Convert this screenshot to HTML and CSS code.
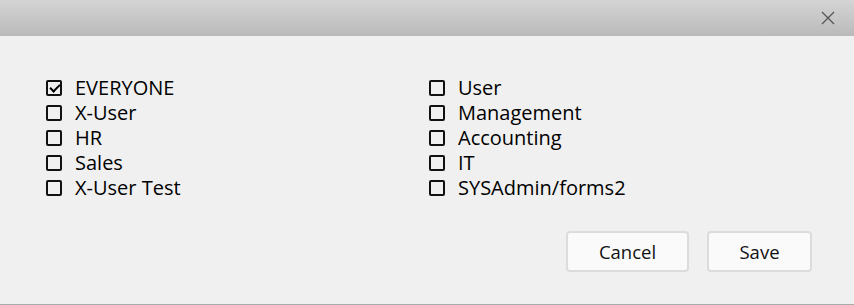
FILE: index.html
```html
<!DOCTYPE html>
<html lang="en">
<head>
  <meta charset="UTF-8" />
  <title>Permissions</title>
  <link rel="stylesheet" href="styles.css">
</head>
<body>
  <div class="dialog">
    <!-- Title bar -->
    <div class="dialog-header">
      <button class="close-btn" aria-label="Close">
        <svg width="14" height="14" viewBox="0 0 14 14">
          <path d="M1 1 L13 13 M13 1 L1 13" stroke="#555" stroke-width="1.3" fill="none"/>
        </svg>
      </button>
    </div>

    <!-- Group list -->
    <div class="dialog-body">
      <div class="groups">
        <div class="group-col">
          <label class="group"><span class="box checked"></span>EVERYONE</label>
          <label class="group"><span class="box"></span>X-User</label>
          <label class="group"><span class="box"></span>HR</label>
          <label class="group"><span class="box"></span>Sales</label>
          <label class="group"><span class="box"></span>X-User Test</label>
        </div>
        <div class="group-col">
          <label class="group"><span class="box"></span>User</label>
          <label class="group"><span class="box"></span>Management</label>
          <label class="group"><span class="box"></span>Accounting</label>
          <label class="group"><span class="box"></span>IT</label>
          <label class="group"><span class="box"></span>SYSAdmin/forms2</label>
        </div>
      </div>

      <div class="dialog-footer">
        <button class="btn btn-cancel">Cancel</button>
        <button class="btn btn-save">Save</button>
      </div>
    </div>
  </div>
</body>
</html>
```

FILE: styles.css
```css
* {
  margin: 0;
  padding: 0;
  box-sizing: border-box;
}
body {
  font-family: 'Open Sans', 'DejaVu Sans', sans-serif;
  background: #f0f0f0;
  color: #000;
  width: 854px;
  height: 305px;
  overflow: hidden;
}
.dialog {
  height: 305px;
  background: #f0f0f0;
  border-bottom: 1px solid #a9a9a9;
  display: flex;
  flex-direction: column;
}
/* Title bar */
.dialog-header {
  height: 36px;
  background: linear-gradient(to bottom, #d4d4d4, #bababa);
  display: flex;
  align-items: center;
  justify-content: flex-end;
  padding-right: 19px;
}
.close-btn {
  background: none;
  border: none;
  width: 14px;
  height: 14px;
  display: flex;
  cursor: pointer;
  margin-top: -1px;
}
/* Body */
.dialog-body {
  flex: 1;
  padding: 40px 42px 0 46px;
  display: flex;
  flex-direction: column;
}
.groups {
  display: flex;
}
.group-col {
  width: 384px;
  display: flex;
  flex-direction: column;
}
.group {
  display: flex;
  align-items: center;
  height: 24.8px;
  font-size: 20px;
  line-height: 24px;
  cursor: pointer;
}
.box {
  width: 16px;
  height: 16px;
  border: 2px solid #111;
  border-radius: 2px;
  margin-right: 13px;
  position: relative;
  flex-shrink: 0;
}
.box.checked::after {
  content: '';
  position: absolute;
  left: 4px;
  top: 0px;
  width: 4px;
  height: 8px;
  border: solid #000;
  border-width: 0 2.5px 2.5px 0;
  transform: rotate(45deg);
}
/* Footer */
.dialog-footer {
  display: flex;
  justify-content: flex-end;
  gap: 18px;
  margin-top: 31px;
}
.btn {
  height: 41px;
  font-family: inherit;
  font-size: 18.5px;
  color: #111;
  background: #fafafa;
  border: 2px solid #dcdcdc;
  border-radius: 4px;
  cursor: pointer;
}
.btn-cancel {
  width: 123px;
}
.btn-save {
  width: 105px;
}
```
